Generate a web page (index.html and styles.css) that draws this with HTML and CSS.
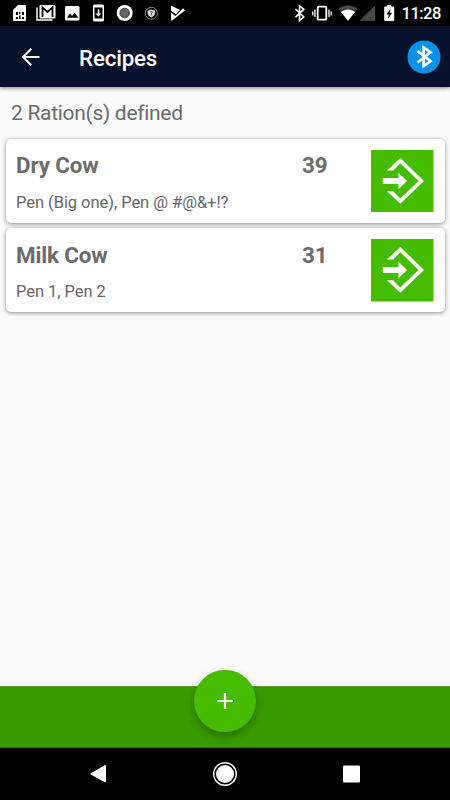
FILE: index.html
```html
<!DOCTYPE html>
<html lang="en">
<head>
<meta charset="utf-8">
<title>Recipes</title>
<link rel="stylesheet" href="styles.css">
</head>
<body>
<div class="screen">
  <div class="status">
    <svg class="notices" width="190" height="26" viewBox="0 0 190 26">
      <path fill="#fff" d="M18 5h7q1 0 1 1v14q0 1-1 1H14q-1 0-1-1V10z"/>
      <path fill="#000" d="M16 12h2v3h-2zM19 12h1.500v2H19zM22 12h2v3h-2zM16 17h2v2h-2zM19 15.500h1.500V19H19zM22 17h2v2h-2z"/>
      <path fill="none" stroke="#fff" stroke-width="1.500" d="M37 7.500V20h15.500"/>
      <rect x="39.500" y="5" width="16" height="13.500" rx="1" fill="#fff"/>
      <path fill="none" stroke="#000" stroke-width="1.800" d="M42.500 17V7.500l5 4.500 5-4.500V17"/>
      <rect x="65" y="6" width="14.500" height="14.500" rx="1.500" fill="#fff"/>
      <path fill="#000" d="M67 17.800l3-4.200 2 2.500 2.700-3.500 3.500 5.200z"/>
      <rect x="93" y="4.500" width="11" height="17" rx="1.500" fill="#fff"/>
      <path fill="#000" d="M94.500 7.500h8v11h-8z"/>
      <path fill="#fff" d="M97.700 9.500h1.600v4h2.200l-3 3-3-3h2.200z"/>
      <circle cx="124.700" cy="13" r="8" fill="#fff"/>
      <circle cx="124.700" cy="13" r="4.800" fill="#666" stroke="#444" stroke-width="1"/>
      <circle cx="151.300" cy="13.300" r="6" fill="none" stroke="#999" stroke-width=".9"/>
      <path fill="#ddd" d="M151.300 9.500l3.700 1.200v2.300q0 2.800-3.700 4.500-3.700-1.700-3.700-4.500v-2.300z"/>
      <path fill="none" stroke="#222" stroke-width=".9" d="M150 12.200q1.300-1.200 2.600 0-.2 1-1.300 1.600v1.400"/>
      <path fill="#fff" d="M171 5.500l9 4.600-4 4.200-5-3.500zM171 12.500l4.500 3.500 7.700-7.800 1.800 2.300-12.500 9.700q-1.500.8-1.500-1z"/>
    </svg>
    <svg class="system" width="106" height="26" viewBox="290 0 106 26">
      <path fill="none" stroke="#fff" stroke-width="1.600" d="M295.500 9l8.300 8-4.300 3.500V5.800l4.300 3.400-8.300 8"/>
      <rect x="317.700" y="6.700" width="8.600" height="13" rx="1" fill="none" stroke="#fff" stroke-width="1.800"/>
      <path stroke="#fff" stroke-width="1.300" d="M315 9.500v7.500M312.800 11.500v4M329 9.500v7.500M331.200 11.500v4"/>
      <path fill="#484848" d="M338.500 9q9.500-7.500 19 0L348 20.800z"/>
      <path fill="#fff" d="M341 12q7-5 14 0l-7 8.800z"/>
      <path fill="#484848" d="M375 5.500v15.300h-15.300z"/>
      <path fill="#fff" d="M387.200 5h4v1.500h2q1 0 1 1v12.500q0 1-1 1h-8q-1 0-1-1V7.500q0-1 1-1h2z"/>
      <path fill="#000" d="M390.500 8.500l-4 6h2.300l-1 4.500 4.200-6.200h-2.200z"/>
    </svg>
    <span class="clock">11:28</span>
  </div>
  <header class="appbar">
    <svg class="back" width="20" height="20" viewBox="0 0 20 20"><path fill="none" stroke="#fff" stroke-width="2" d="M18.500 10H2.500M10.300 1.800L2.100 10l8.200 8.200"/></svg>
    <h1>Recipes</h1>
    <svg class="bluetooth" width="36" height="36" viewBox="0 0 36 36">
      <circle cx="18" cy="18" r="17" fill="#0a91e8" stroke="#06152d" stroke-width="1"/>
      <path fill="none" stroke="#fff" stroke-width="2.700" d="M11.500 12l13 10.300-6.800 4.700V8.500l6.800 4.700-13 10.300"/>
    </svg>
  </header>
  <main>
    <p class="summary">2 Ration(s) defined</p>
    <div class="list">
      <article class="card">
        <div class="info"><h2>Dry Cow</h2><p>Pen (Big one), Pen @ #@&amp;+!?</p></div>
        <span class="count">39</span>
        <svg class="load" width="62.500" height="62.500" viewBox="0 0 62.500 62.500">
          <path fill="#46bc00" d="M0 0h62.500v62.500H0z"/>
          <path fill="#fff" d="M16 20.500L29.300 8 53 31 29.300 53.700 16 41.200h6.200l7.100 7.200L47.500 31 29.300 13.200l-7.100 7.300zM11.800 28h15.700v-5.200L36 31l-8.500 8.200V34H11.800z"/>
        </svg>
      </article>
      <article class="card">
        <div class="info"><h2>Milk Cow</h2><p>Pen 1, Pen 2</p></div>
        <span class="count">31</span>
        <svg class="load" width="62.500" height="62.500" viewBox="0 0 62.500 62.500">
          <path fill="#46bc00" d="M0 0h62.500v62.500H0z"/>
          <path fill="#fff" d="M16 20.500L29.300 8 53 31 29.300 53.700 16 41.200h6.200l7.100 7.200L47.500 31 29.300 13.200l-7.100 7.300zM11.800 28h15.700v-5.200L36 31l-8.500 8.200V34H11.800z"/>
        </svg>
      </article>
    </div>
  </main>
  <footer class="actions">
    <button class="add" aria-label="Add"><svg width="16" height="16" viewBox="0 0 16 16"><path stroke="#fff" stroke-width="2.200" d="M8 0v16M0 8h16"/></svg></button>
  </footer>
  <nav class="navbar">
    <svg width="16" height="20" viewBox="0 0 16 20"><path fill="#fff" d="M15.200 1q.8-.4.800.500v16.500q0 .9-.8.500L.8 10.400q-.8-.6 0-1.100z"/></svg>
    <svg width="24" height="26" viewBox="0 0 24 26"><circle cx="12" cy="13" r="11.300" fill="none" stroke="#fff" stroke-width="1.400"/><circle cx="12" cy="13" r="9" fill="#fff"/></svg>
    <svg width="17" height="18" viewBox="0 0 17 18"><rect y=".5" width="17" height="17" rx="1" fill="#fff"/></svg>
  </nav>
</div>
</body>
</html>
```
FILE: styles.css
```css
* { box-sizing: border-box; }
body, h1, h2, p { margin: 0; }
body { font-family: Roboto, sans-serif; color: #6b6b6b; }
.screen {
  width: 450px;
  height: 800px;
  display: flex;
  flex-direction: column;
  background: #fafafa;
  overflow: hidden;
}
.status {
  height: 26px;
  flex: none;
  display: flex;
  align-items: center;
  background: #000;
}
.system { margin-left: 100px; }
.clock {
  margin-left: 5.5px;
  color: #fff;
  font-size: 16.5px;
  font-weight: 500;
  line-height: 26px;
  letter-spacing: -.5px;
  padding-top: 2px;
}
.appbar {
  height: 61px;
  flex: none;
  display: flex;
  align-items: center;
  padding: 0 8px 0 21px;
  background: #08122d;
  box-shadow: 0 1px 4px rgba(0, 0, 0, .5);
}
.appbar h1 {
  margin-left: 38px;
  padding-top: 2px;
  color: #fff;
  font-size: 22.3px;
  line-height: 28px;
  font-weight: 500;
  letter-spacing: -.15px;
}
.bluetooth { margin-left: auto; }
main { flex: 1; }
.summary {
  padding: 11px 11px 0;
  height: 46px;
  font-size: 21px;
  line-height: 30px;
  letter-spacing: -.3px;
}
.list {
  height: 183px;
  padding: 5.5px 5.5px 0;
  overflow: hidden;
}
.card {
  display: flex;
  align-items: flex-start;
  height: 84px;
  margin-bottom: 5.5px;
  padding: 11px 11px 0 10.5px;
  border-radius: 5px;
  background: #fff;
  box-shadow: 0 1px 4px rgba(0, 0, 0, .45);
}
.info { width: 286px; }
.info, .count { padding-top: .5px; }
.info h2, .count {
  font-size: 22.4px;
  line-height: 31px;
  font-weight: 700;
  letter-spacing: -.15px;
}
.info p {
  margin-top: 10.5px;
  font-size: 16.5px;
  line-height: 22px;
  letter-spacing: -.05px;
  color: #666;
}
.load { margin-left: auto; }
.actions {
  height: 62px;
  flex: none;
  display: flex;
  justify-content: center;
  background: #389b00;
  border-top: 1px solid #4b9f22;
  border-bottom: 1px solid #287400;
}
.add {
  width: 61.5px;
  height: 61.5px;
  margin-top: -17px;
  padding: 0;
  display: flex;
  flex: none;
  align-items: center;
  justify-content: center;
  border: 0;
  border-radius: 50%;
  background: #46bc00;
  box-shadow: 0 4px 8px rgba(0, 0, 0, .28);
}
.navbar {
  height: 52px;
  flex: none;
  display: flex;
  align-items: center;
  justify-content: space-between;
  padding: 0 90px;
  background: #000;
}
```
